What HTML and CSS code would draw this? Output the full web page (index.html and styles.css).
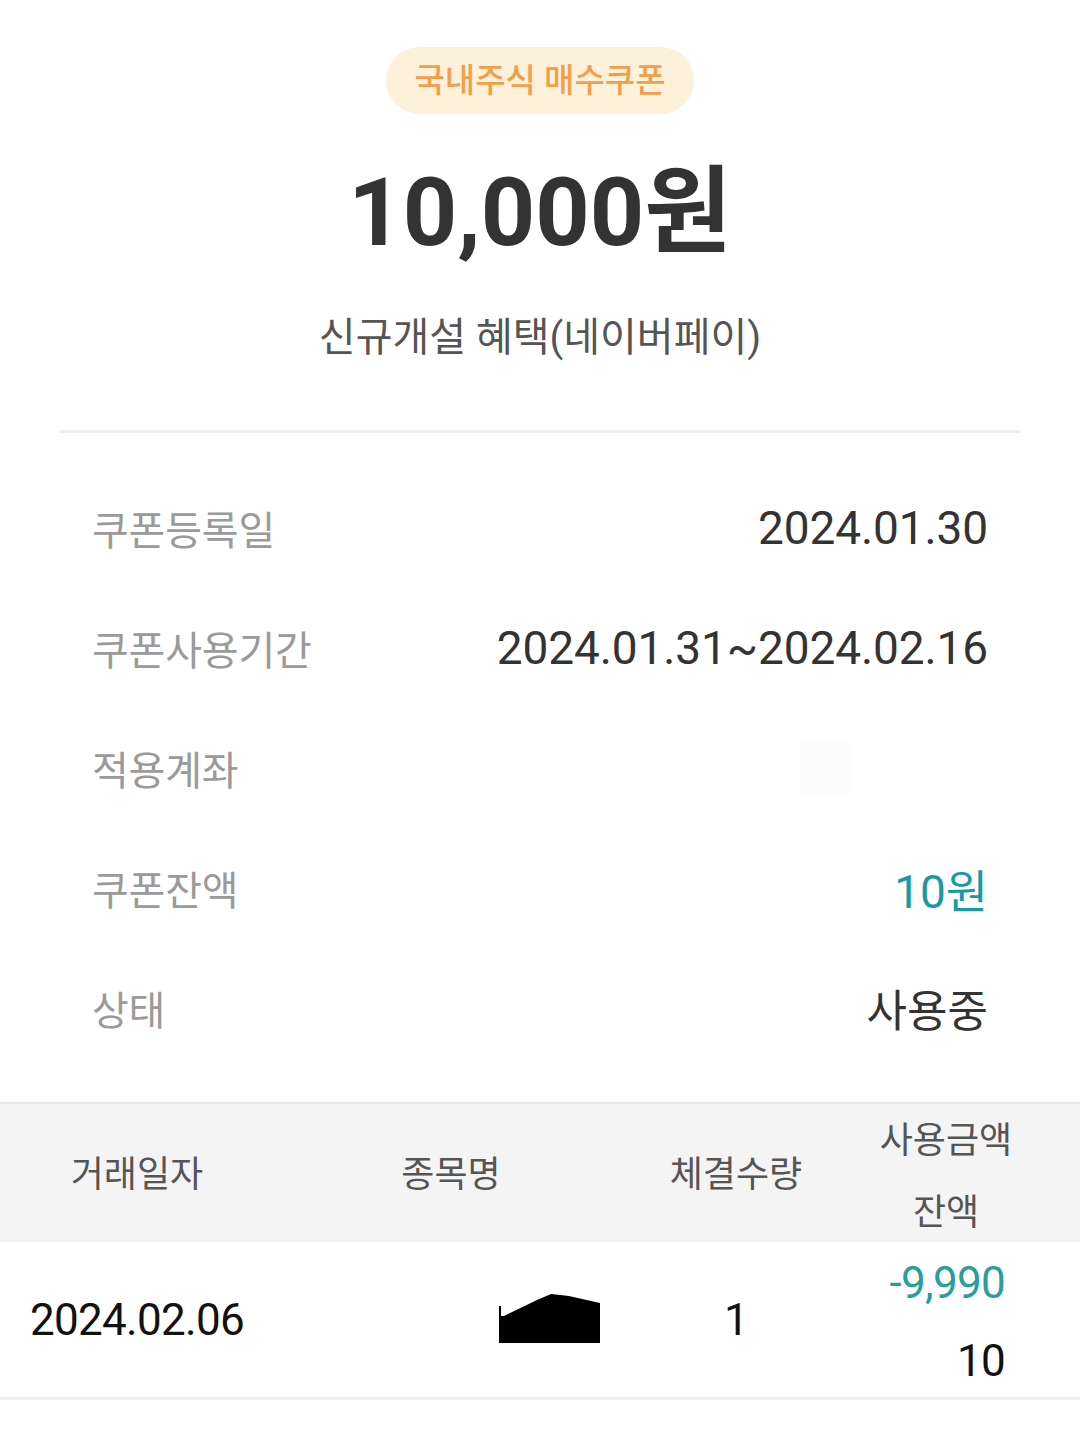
FILE: index.html
```html
<!DOCTYPE html>
<html lang="ko">
<head>
  <meta charset="UTF-8" />
  <meta name="viewport" content="width=device-width, initial-scale=1" />
  <title>쿠폰 상세</title>
  <link rel="stylesheet" href="styles.css">
</head>
<body>
  <div class="summary">
    <div class="badge">국내주식 매수쿠폰</div>
    <h1 class="amount">10,000원</h1>
    <div class="subtitle">신규개설 혜택(네이버페이)</div>
  </div>

  <hr class="divider" />

  <!-- Coupon info -->
  <div class="info">
    <div class="info-row">
      <span class="label">쿠폰등록일</span>
      <span class="value">2024.01.30</span>
    </div>
    <div class="info-row">
      <span class="label">쿠폰사용기간</span>
      <span class="value">2024.01.31~2024.02.16</span>
    </div>
    <div class="info-row">
      <span class="label">적용계좌</span>
      <span class="value masked"></span>
    </div>
    <div class="info-row">
      <span class="label">쿠폰잔액</span>
      <span class="value teal">10원</span>
    </div>
    <div class="info-row">
      <span class="label">상태</span>
      <span class="value kr">사용중</span>
    </div>
  </div>

  <!-- Usage history -->
  <div class="history">
    <div class="history-head">
      <div class="col">거래일자</div>
      <div class="col">종목명</div>
      <div class="col">체결수량</div>
      <div class="col col-amount">
        <span>사용금액</span>
        <span>잔액</span>
      </div>
    </div>
    <div class="history-row">
      <div class="col num">2024.02.06</div>
      <div class="col col-name">
        <svg class="redact" width="102" height="50" viewBox="0 0 102 50">
          <path d="M0 12 L2 12 L2 22 L5 22 L38 6 L52 0 L70 2 L101 9 L101 49 L0 49 Z" fill="#000"/>
        </svg>
      </div>
      <div class="col num">1</div>
      <div class="col col-amount right">
        <span class="num teal">-9,990</span>
        <span class="num">10</span>
      </div>
    </div>
  </div>
</body>
</html>
```

FILE: styles.css
```css
body {
  margin: 0;
  background: #fff;
  font-family: Roboto, "Noto Sans CJK KR", sans-serif;
  color: #333;
}

.summary {
  display: flex;
  flex-direction: column;
  align-items: center;
  padding-top: 47px;
}

.badge {
  height: 67px;
  line-height: 67px;
  padding: 0 28px;
  border-radius: 34px;
  background: #fdf1dc;
  color: #f0a04a;
  font-size: 33px;
  font-weight: 500;
}

.amount {
  margin: 34px 0 0;
  height: 130px;
  line-height: 130px;
  font-size: 95px;
  font-weight: 700;
  color: #333;
}

.subtitle {
  margin-top: 30px;
  height: 60px;
  line-height: 60px;
  font-size: 40px;
  color: #555;
}

.divider {
  margin: 62px 60px 0;
  border: none;
  height: 3px;
  background: #eeeeee;
}

.info {
  margin-top: 35px;
  padding: 0 92px;
}

.info-row {
  display: flex;
  justify-content: space-between;
  align-items: center;
  height: 120px;
}

.label {
  font-size: 40px;
  color: #9a9a9a;
  letter-spacing: -0.2px;
}

.value {
  font-size: 46px;
  color: #333;
  letter-spacing: -0.1px;
}

.value.kr {
  font-size: 44px;
  letter-spacing: 0;
}

.value.masked {
  width: 50px;
  height: 50px;
  margin-right: 138px;
  background: #fbfbfb;
}

.teal {
  color: #1a9aa0;
}

/* History table */
.history {
  margin-top: 34px;
}

.history-head,
.history-row {
  display: grid;
  grid-template-columns: 274px 354px 216px 204px;
}

.history-head {
  height: 138px;
  border-top: 2px solid #e6e6e6;
  background: #f4f4f4;
  font-size: 36px;
  color: #555;
}

.history-row {
  height: 155px;
  border-bottom: 3px solid #efefef;
}

.col {
  display: flex;
  align-items: center;
  justify-content: center;
}

.col-amount {
  flex-direction: column;
  gap: 20px;
}

.history-head .col {
  padding-bottom: 4px;
}

.history-head .col-amount {
  padding-bottom: 0;
}

.col-amount.right {
  align-items: flex-end;
  padding-right: 43px;
  gap: 26px;
  padding-top: 4px;
}

.col-name {
  justify-content: flex-start;
  padding-left: 225px;
}

.redact {
  margin-top: -2px;
}

.num {
  font-size: 44px;
  color: #111;
  letter-spacing: -0.7px;
}

.num.teal {
  color: #2a9d9d;
}
```
